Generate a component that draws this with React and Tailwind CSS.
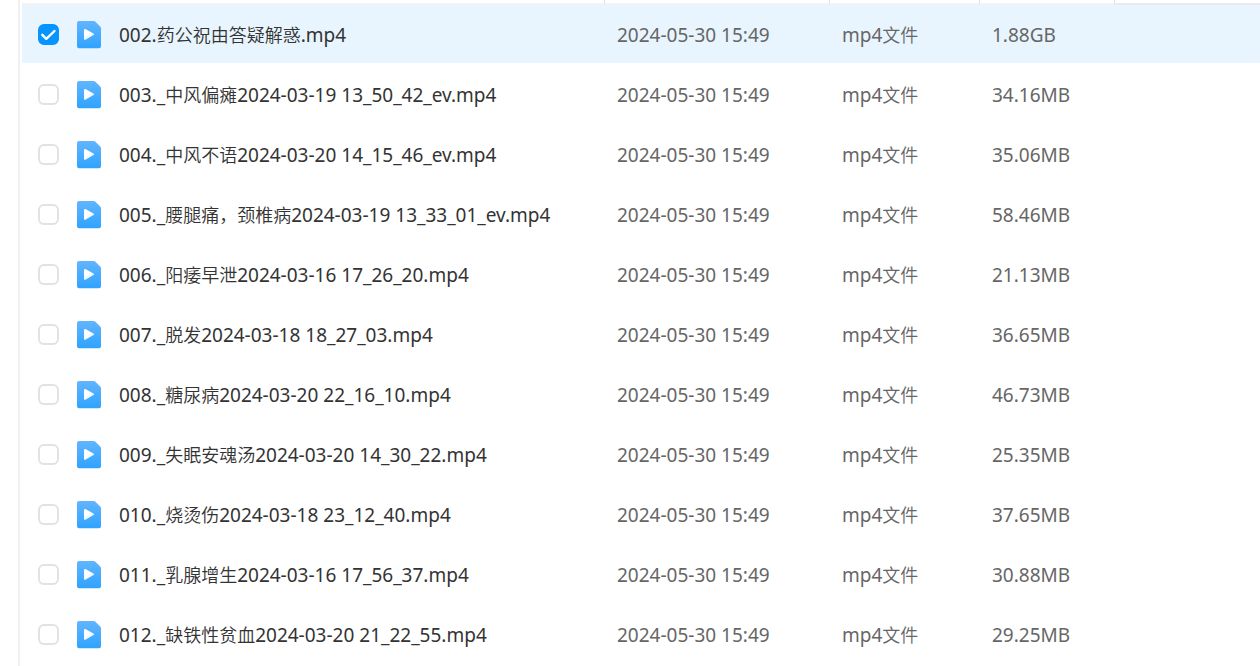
import { useState } from 'react'

const FILES = [
  { name: '002.药公祝由答疑解惑.mp4', size: '1.88GB' },
  { name: '003._中风偏瘫2024-03-19 13_50_42_ev.mp4', size: '34.16MB' },
  { name: '004._中风不语2024-03-20 14_15_46_ev.mp4', size: '35.06MB' },
  { name: '005._腰腿痛，颈椎病2024-03-19 13_33_01_ev.mp4', size: '58.46MB' },
  { name: '006._阳痿早泄2024-03-16 17_26_20.mp4', size: '21.13MB' },
  { name: '007._脱发2024-03-18 18_27_03.mp4', size: '36.65MB' },
  { name: '008._糖尿病2024-03-20 22_16_10.mp4', size: '46.73MB' },
  { name: '009._失眠安魂汤2024-03-20 14_30_22.mp4', size: '25.35MB' },
  { name: '010._烧烫伤2024-03-18 23_12_40.mp4', size: '37.65MB' },
  { name: '011._乳腺增生2024-03-16 17_56_37.mp4', size: '30.88MB' },
  { name: '012._缺铁性贫血2024-03-20 21_22_55.mp4', size: '29.25MB' },
]

// Chinese glyphs look larger than latin at the same size, so they are set a step smaller
function MixedText({ text }) {
  const runs = text.split(/([\u4e00-\u9fff\uff0c]+)/)

  return runs.map((run, i) =>
    i % 2 === 1 ? (
      <span key={i} className="text-lg/7 font-[350]">
        {run}
      </span>
    ) : (
      run
    )
  )
}

function VideoIcon() {
  return (
    <svg width="26" height="28" viewBox="0 0 26 28" className="shrink-0" aria-hidden="true">
      <defs>
        <linearGradient id="file-blue" x1="0" y1="0" x2="0" y2="1">
          <stop offset="0" stopColor="#62b5ff" />
          <stop offset="1" stopColor="#2fa3ff" />
        </linearGradient>
        <linearGradient id="play-white" x1="0" y1="0" x2="1" y2="1">
          <stop offset="0.4" stopColor="#fff" />
          <stop offset="1" stopColor="#d5ecff" />
        </linearGradient>
      </defs>
      <path
        d="M3 0h14.8a2 2 0 0 1 1.4.6l5.2 5.2a2 2 0 0 1 .6 1.4V25.3a2 2 0 0 1-2 2H3a2 2 0 0 1-2-2v-23.3a2 2 0 0 1 2-2z"
        fill="url(#file-blue)"
      />
      <path
        d="M8 9c0-.8.7-1.2 1.4-.9l8.1 4.4c.7.4.7 1.2 0 1.6l-8.1 4.6c-.7.4-1.4 0-1.4-.8z"
        fill="url(#play-white)"
      />
    </svg>
  )
}

function FileRow({ file, checked, onToggle }) {
  const cell = `h-15 p-0 border-b-2 border-white bg-clip-padding ${checked ? 'bg-[#e8f5fe]' : 'bg-white'}`

  return (
    <tr>
      <td className={cell}>
        <label className="flex items-center pl-4 cursor-pointer">
          <span className="grid size-[21px] shrink-0">
            <input
              type="checkbox"
              checked={checked}
              onChange={onToggle}
              className="col-start-1 row-start-1 size-[21px] appearance-none rounded-md border-2 border-[#e2e2e2] bg-white checked:border-[#0695ff] checked:bg-[#0695ff] cursor-pointer"
            />
            {checked && (
              <svg viewBox="0 0 21 21" className="col-start-1 row-start-1 size-[21px] pointer-events-none">
                <path
                  d="M4.3 10.8l4 4 8.2-7.8"
                  fill="none"
                  stroke="#fff"
                  strokeWidth="2.4"
                  strokeLinecap="round"
                  strokeLinejoin="round"
                />
              </svg>
            )}
          </span>
          <span className="flex px-[17px] pt-0.5">
            <VideoIcon />
          </span>
          <span className="pt-0.5 text-[#333] whitespace-nowrap">
            <MixedText text={file.name} />
          </span>
        </label>
      </td>
      <td className={`${cell} pl-3 pt-0.5`}>2024-05-30 15:49</td>
      <td className={`${cell} pl-3 pt-0.5`}>
        <MixedText text="mp4文件" />
      </td>
      <td className={`${cell} pl-3 pt-0.5`}>{file.size}</td>
      <td className={cell}></td>
    </tr>
  )
}

export default function App() {
  const [selected, setSelected] = useState([0])

  const toggle = index => {
    setSelected(prev => (prev.includes(index) ? prev.filter(i => i !== index) : [...prev, index]))
  }

  return (
    <div className="min-h-screen bg-white pl-[18px] flex">
      <main className="flex-1 border-l-2 border-[#f0f0f0] pl-0.5 font-['Noto_Sans','Noto_Sans_CJK_SC',sans-serif] text-[19px] leading-7 text-[#666]">
        <table className="w-full table-fixed border-separate border-spacing-0 text-left">
          <colgroup>
            <col className="w-[583px]" />
            <col className="w-[225px]" />
            <col className="w-[150px]" />
            <col className="w-[135px]" />
            <col />
          </colgroup>
          <thead>
            <tr>
              <th className="h-[5px] p-0 border-b-2 border-r border-b-[#f3f3f3] border-r-[#e4e4e4]"></th>
              <th className="h-[5px] p-0 border-b-2 border-r border-b-[#f3f3f3] border-r-[#e4e4e4]"></th>
              <th className="h-[5px] p-0 border-b-2 border-r border-b-[#f3f3f3] border-r-[#e4e4e4]"></th>
              <th className="h-[5px] p-0 border-b-2 border-r border-b-[#f3f3f3] border-r-[#e4e4e4]"></th>
              <th className="h-[5px] p-0 border-b-2 border-[#ebebee]"></th>
            </tr>
          </thead>
          <tbody>
            {FILES.map((file, index) => (
              <FileRow
                key={file.name}
                file={file}
                checked={selected.includes(index)}
                onToggle={() => toggle(index)}
              />
            ))}
          </tbody>
        </table>
      </main>
    </div>
  )
}
